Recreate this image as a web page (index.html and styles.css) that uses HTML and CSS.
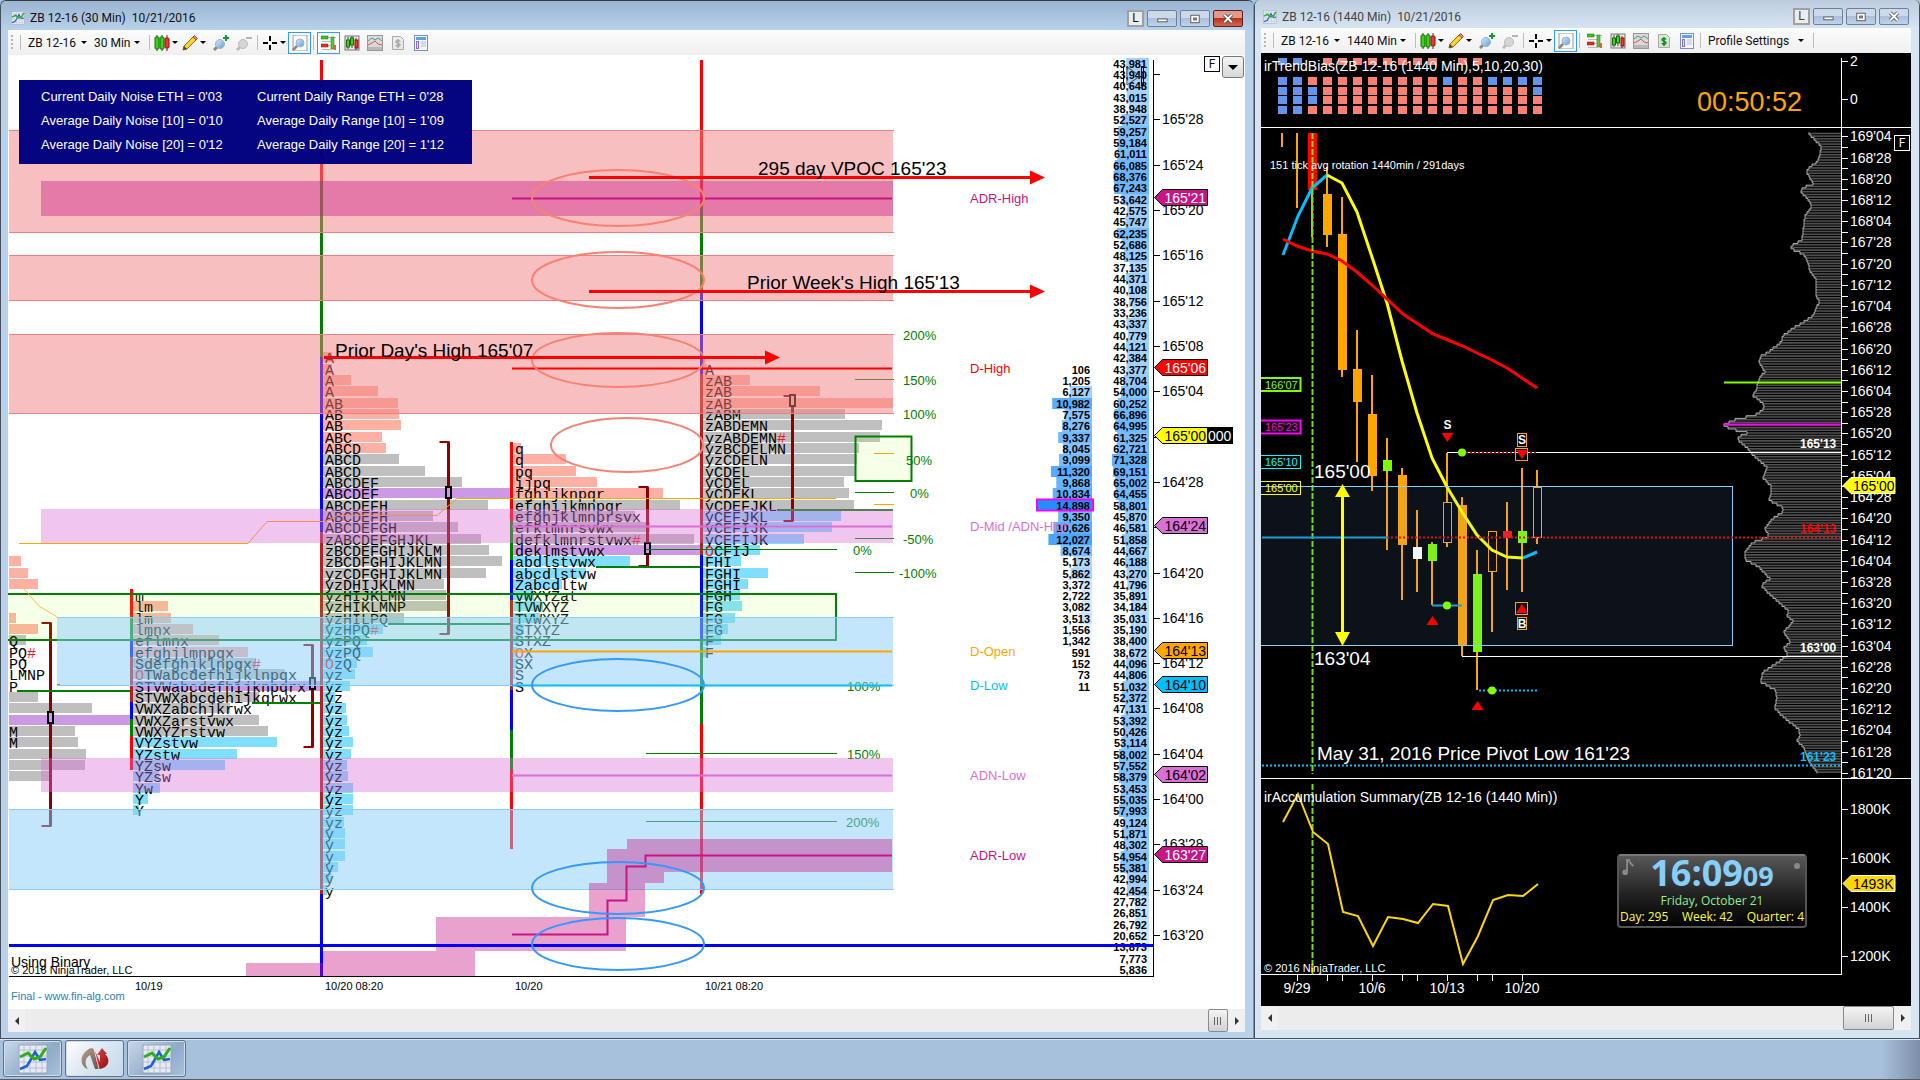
FILE: index.html
```html
<!DOCTYPE html>
<html lang="en">
<head>
    <meta charset="UTF-8">
    <meta name="viewport" content="width=device-width, initial-scale=1.0">
    <title>ZB 12-16 Charts</title>
    <link rel="stylesheet" href="styles.css">
</head>
<body>
    <svg class="sprite" aria-hidden="true">
        <defs>
            <linearGradient id="lens" x1="0" y1="0" x2="1" y2="1">
                <stop offset="0" stop-color="#d6ecfb"/><stop offset="1" stop-color="#5f9fd6"/>
            </linearGradient>
            <linearGradient id="brown" x1="0" y1="0" x2="1" y2="1">
                <stop offset="0" stop-color="#b5a393"/><stop offset="1" stop-color="#6b5646"/>
            </linearGradient>
            <linearGradient id="crimson" x1="0" y1="0" x2="1" y2="1">
                <stop offset="0" stop-color="#e04a4a"/><stop offset="1" stop-color="#8f0f18"/>
            </linearGradient>
        </defs>
        <symbol id="i-app" viewBox="0 0 30 30">
            <rect x="1" y="1" width="28" height="28" fill="#e6eaf4" stroke="#9aa3bb"/>
            <path d="M6 1v28M12 1v28M18 1v28M24 1v28M1 6h28M1 12h28M1 18h28M1 24h28" stroke="#b9c0d2" stroke-width="1"/>
            <path d="M2 25l7-3 3-5 5-9 5 8 6-1" fill="none" stroke="#1f5fd0" stroke-width="2.5"/>
            <path d="M2 13l8-4 6 6 6-2 6-9" fill="none" stroke="#2fae1c" stroke-width="3"/>
        </symbol>
        <symbol id="i-candles" viewBox="0 0 16 16">
            <path d="M3 0v16M8 0v16M13 0v16" stroke="#333" stroke-width="1"/>
            <rect x="1" y="2" width="4" height="12" rx="1" fill="#3fd01c" stroke="#1b6d0b"/>
            <rect x="6" y="2" width="4" height="12" rx="1" fill="#3fd01c" stroke="#1b6d0b"/>
            <rect x="11" y="3" width="4" height="10" rx="1" fill="#f0372b" stroke="#8a1610"/>
        </symbol>
        <symbol id="i-pencil" viewBox="0 0 16 16">
            <path d="M1 15l1-4L11 2l3 3-9 9z" fill="#ffd32a" stroke="#8b6a1a"/>
            <path d="M11 2l1.500-1.500 3 3L14 5z" fill="#f08a8a" stroke="#a34c4c"/>
            <path d="M1 15l1-4 3 3z" fill="#5a4632"/>
        </symbol>
        <symbol id="i-zoomin" viewBox="0 0 16 16">
            <path d="M1 15l4-4" stroke="#888" stroke-width="3"/>
            <circle cx="7" cy="9" r="4.500" fill="url(#lens)" stroke="#9fb2c4"/>
            <path d="M13 0v6M10 3h6" stroke="#0f9d2f" stroke-width="2"/>
        </symbol>
        <symbol id="i-zoomout" viewBox="0 0 16 16">
            <path d="M1 15l4-4" stroke="#bbb" stroke-width="3"/>
            <circle cx="7" cy="9" r="4.500" fill="#d5d5d5" stroke="#bdbdbd"/>
            <path d="M10 3h6" stroke="#b5b5b5" stroke-width="2"/>
        </symbol>
        <symbol id="i-cross" viewBox="0 0 16 16">
            <path d="M8 1v5M8 10v5M1 8h5M10 8h5" stroke="#000" stroke-width="2"/>
        </symbol>
        <symbol id="i-lens" viewBox="0 0 16 16">
            <rect x="1" y="0" width="14" height="16" fill="#fafafa" stroke="#999"/>
            <path d="M1 15l4-4" stroke="#888" stroke-width="2.500"/>
            <circle cx="8" cy="8" r="4" fill="url(#lens)" stroke="#9fb2c4"/>
        </symbol>
        <symbol id="i-orders" viewBox="0 0 16 16">
            <path d="M7 2.500h8M1 6.500h9M7 10.500h3M1 14.500h9" stroke="#bbb"/>
            <rect x="0" y="1" width="7" height="3" fill="#37c61c" stroke="#1b6d0b" stroke-width=".5"/>
            <rect x="0" y="9" width="7" height="3" fill="#ee2a1e" stroke="#8a1610" stroke-width=".5"/>
            <rect x="10" y="2" width="3" height="12" fill="#55c93a" stroke="#1b6d0b" stroke-width=".5"/>
            <rect x="13" y="10" width="2" height="5" fill="#e0603c"/>
        </symbol>
        <symbol id="i-bars" viewBox="0 0 16 16">
            <rect x="1" y="1" width="14" height="14" fill="#e8e8e8" stroke="#777"/>
            <path d="M4 2v12M8 1v12M12 3v12" stroke="#444"/>
            <rect x="2.500" y="5" width="3" height="7" fill="#3fd01c" stroke="#1b6d0b"/>
            <rect x="6.500" y="3" width="3" height="7" fill="#3fd01c" stroke="#1b6d0b"/>
            <rect x="11" y="5" width="3" height="8" fill="#f0372b" stroke="#8a1610"/>
        </symbol>
        <symbol id="i-panel" viewBox="0 0 16 16">
            <rect x=".5" y=".5" width="15" height="15" fill="#d9d9d9" stroke="#999"/>
            <path d="M1 6l4-3 3 2 3-2 4 3" fill="none" stroke="#3aa58c"/>
            <path d="M1 10l4-2 3-2 3 3 4 1" fill="none" stroke="#e0554a"/>
            <rect x="1" y="12" width="14" height="3" fill="#b8b8b8"/>
        </symbol>
        <symbol id="i-dollar" viewBox="0 0 16 16">
            <path d="M2.500 1.500h8l3 3v10h-11z" fill="currentColor" fill-opacity=".15" stroke="#aaa"/>
            <path d="M10 6.500C9.500 5 6 5 6 6.800S10 8 10 9.800 6.500 11.800 6 10M8 4v9" fill="none" stroke="currentColor" stroke-width="1.500"/>
        </symbol>
        <symbol id="i-form" viewBox="0 0 16 16">
            <rect x="1.500" y=".5" width="13" height="15" fill="#f2f6fd" stroke="#7c8fc0"/>
            <rect x="3" y="2" width="10" height="3" fill="#5aa3ec"/>
            <rect x="3.500" y="6.500" width="2" height="7" fill="#e6dcff" stroke="#8c6be0"/>
            <path d="M8 7h5M8 9h5M8 11h5" stroke="#b9c0d2"/>
        </symbol>
        <symbol id="i-ninja" viewBox="0 0 30 24">
            <path d="M8 22C-1 19-1 6 11 1l3 1 5 20h-4L10 8c-5 3-6 9-2 14z" fill="url(#brown)"/>
            <path d="M14 2l6 13V8h-3l5-7 5 6h-2c6 5 4 14-6 15l-3-5z" fill="url(#crimson)"/>
            <path d="M14 2l5 20" stroke="#fff" stroke-width=".8"/>
        </symbol>
    </svg>

    <main class="desktop">
        <section class="window active" aria-label="30 minute chart">
            <header class="titlebar">
                <svg class="app-icon"><use href="#i-app"/></svg>
                <span class="title">ZB 12-16 (30 Min)&nbsp; 10/21/2016</span>
                <button class="link-btn">L</button>
                <button class="win-btn" aria-label="Minimize"><svg viewBox="0 0 30 16"><rect x="10.500" y="8.500" width="10" height="3" fill="#fff" stroke="#556"/></svg></button>
                <button class="win-btn" aria-label="Maximize"><svg viewBox="0 0 30 16"><rect x="10.500" y="4.500" width="9" height="8" fill="#fff" stroke="#556"/><rect x="13.500" y="7.500" width="3" height="2" fill="#9ab" stroke="#556"/></svg></button>
                <button class="win-btn close" aria-label="Close"><svg viewBox="0 0 30 16"><path d="M11 4l8 8M19 4l-8 8" stroke="#544" stroke-width="4"/><path d="M11 4l8 8M19 4l-8 8" stroke="#fff" stroke-width="2"/></svg></button>
            </header>
            <nav class="toolbar" aria-label="Chart tools">
                <span class="grip"></span><span class="sep"></span>
                <select class="pick symbol" aria-label="Instrument"><option>ZB 12-16</option></select>
                <select class="pick period30" aria-label="Interval"><option>30 Min</option></select>
                <span class="sep"></span>
                <button class="tool menu" aria-label="Chart style"><svg><use href="#i-candles"/></svg></button>
                <button class="tool menu" aria-label="Drawing tools"><svg><use href="#i-pencil"/></svg></button>
                <button class="tool" aria-label="Zoom in"><svg><use href="#i-zoomin"/></svg></button>
                <button class="tool" aria-label="Zoom out"><svg><use href="#i-zoomout"/></svg></button>
                <span class="sep"></span>
                <button class="tool menu cursor" aria-label="Cursor"><svg><use href="#i-cross"/></svg></button>
                <button class="tool on" aria-label="Data box"><svg><use href="#i-lens"/></svg></button>
                <span class="sep"></span>
                <button class="tool on" aria-label="Chart trader"><svg><use href="#i-orders"/></svg></button>
                <button class="tool" aria-label="Data series"><svg><use href="#i-bars"/></svg></button>
                <button class="tool" aria-label="Indicators"><svg><use href="#i-panel"/></svg></button>
                <button class="tool off" aria-label="Strategies"><svg><use href="#i-dollar"/></svg></button>
                <button class="tool" aria-label="Properties"><svg><use href="#i-form"/></svg></button>
            </nav>
            <div class="pane light">
                <svg id="chart30" class="chart" viewBox="8 55 1237 954" preserveAspectRatio="xMinYMin meet"></svg>
                <div class="pane-tools">
                    <button class="fix-btn">F</button>
                    <button class="drop-btn" aria-label="Chart menu"></button>
                </div>
            </div>
            <div class="scrollbar">
                <button class="arrow left" aria-label="Scroll left"></button>
                <span class="track"></span>
                <button class="thumb" aria-label="Scroll position"></button>
                <button class="arrow right" aria-label="Scroll right"></button>
            </div>
        </section>

        <section class="window" aria-label="Daily chart">
            <header class="titlebar">
                <svg class="app-icon"><use href="#i-app"/></svg>
                <span class="title">ZB 12-16 (1440 Min)&nbsp; 10/21/2016</span>
                <button class="link-btn">L</button>
                <button class="win-btn" aria-label="Minimize"><svg viewBox="0 0 30 16"><rect x="10.500" y="8.500" width="10" height="3" fill="#fff" stroke="#556"/></svg></button>
                <button class="win-btn" aria-label="Maximize"><svg viewBox="0 0 30 16"><rect x="10.500" y="4.500" width="9" height="8" fill="#fff" stroke="#556"/><rect x="13.500" y="7.500" width="3" height="2" fill="#9ab" stroke="#556"/></svg></button>
                <button class="win-btn" aria-label="Close"><svg viewBox="0 0 30 16"><path d="M11 4l8 8M19 4l-8 8" stroke="#556" stroke-width="4"/><path d="M11 4l8 8M19 4l-8 8" stroke="#fff" stroke-width="2"/></svg></button>
            </header>
            <nav class="toolbar" aria-label="Chart tools">
                <span class="grip"></span><span class="sep"></span>
                <select class="pick symbol" aria-label="Instrument"><option>ZB 12-16</option></select>
                <select class="pick period1440" aria-label="Interval"><option>1440 Min</option></select>
                <span class="sep"></span>
                <button class="tool menu" aria-label="Chart style"><svg><use href="#i-candles"/></svg></button>
                <button class="tool menu" aria-label="Drawing tools"><svg><use href="#i-pencil"/></svg></button>
                <button class="tool" aria-label="Zoom in"><svg><use href="#i-zoomin"/></svg></button>
                <button class="tool" aria-label="Zoom out"><svg><use href="#i-zoomout"/></svg></button>
                <span class="sep"></span>
                <button class="tool menu cursor" aria-label="Cursor"><svg><use href="#i-cross"/></svg></button>
                <button class="tool on" aria-label="Data box"><svg><use href="#i-lens"/></svg></button>
                <span class="sep"></span>
                <button class="tool" aria-label="Chart trader"><svg><use href="#i-orders"/></svg></button>
                <button class="tool" aria-label="Data series"><svg><use href="#i-bars"/></svg></button>
                <button class="tool" aria-label="Indicators"><svg><use href="#i-panel"/></svg></button>
                <button class="tool money" aria-label="Strategies"><svg><use href="#i-dollar"/></svg></button>
                <button class="tool" aria-label="Properties"><svg><use href="#i-form"/></svg></button>
                <span class="sep"></span>
                <select class="pick profile" aria-label="Profile"><option>Profile Settings</option></select>
                <span class="sep"></span>
            </nav>
            <div class="pane dark">
                <svg id="chart1440" class="chart" viewBox="1261 53 650 953" preserveAspectRatio="xMinYMin meet"></svg>
                <button class="fix-btn">F</button>
                <div class="clock">
                    <svg class="note" viewBox="0 0 12 18"><path d="M5 14V1h2c0 3 4 4 4 7" fill="none" stroke="#888" stroke-width="2"/><ellipse cx="3" cy="14" rx="3" ry="3" fill="#888"/></svg>
                    <span class="dot"></span>
                    <div class="time">16:09<small>09</small></div>
                    <div class="date">Friday, October 21</div>
                    <div class="counts"><span>Day: 295</span><span>Week: 42</span><span>Quarter: 4</span></div>
                </div>
            </div>
            <div class="scrollbar wide">
                <button class="arrow left" aria-label="Scroll left"></button>
                <span class="track"></span>
                <button class="thumb" aria-label="Scroll position"></button>
                <button class="arrow right" aria-label="Scroll right"></button>
            </div>
        </section>
    </main>

    <footer class="taskbar">
        <button class="task" aria-label="Chart window"><svg viewBox="0 0 30 30"><use href="#i-app"/></svg></button>
        <button class="task current" aria-label="NinjaTrader"><svg viewBox="0 0 30 24"><use href="#i-ninja"/></svg></button>
        <button class="task" aria-label="Chart window"><svg viewBox="0 0 30 30"><use href="#i-app"/></svg></button>
    </footer>
    <script src="charts.js"></script>
</body>
</html>
```
FILE: styles.css
```css
* { box-sizing: border-box; }
body {
    margin: 0;
    height: 100vh;
    display: flex;
    flex-direction: column;
    overflow: hidden;
    background: #a7c0dc;
    font-family: Roboto, "Liberation Sans", sans-serif;
    font-size: 12px;
    color: #111;
}
button, select {
    font: inherit;
    color: inherit;
    margin: 0;
    padding: 0;
    border: 0;
    background: none;
}
.sprite {
    position: absolute;
    width: 0;
    height: 0;
}
.desktop {
    flex: 1;
    min-height: 0;
    display: grid;
    grid-template-columns: 1254fr 666fr;
}

/* windows */
.window {
    display: flex;
    flex-direction: column;
    min-width: 0;
    min-height: 0;
    padding: 0 8px 8px 6px;
    background: #d7e4f1;
    border: 1px solid #46505c;
    border-top: 0;
    border-radius: 6px 6px 0 0;
}
.window.active {
    padding: 0 8px 6px 7px;
    background: #b9d1ea;
    border-top: 1px solid #3a3a44;
    border-right-color: #1fb5e0;
}
.titlebar {
    height: 28px;
    flex: none;
    display: flex;
    align-items: center;
    gap: 3px;
    margin: 0 -8px 0 -6px;
    padding: 5px 10px 0 8px;
    background: linear-gradient(#bccde0, #d7e4f1);
    border-radius: 6px 6px 0 0;
    color: #444;
}
.active .titlebar {
    height: 29px;
    margin: 0 -8px 0 -7px;
    padding: 5px 10px 0;
    background: linear-gradient(#9ab4d2, #b9d1ea);
    color: #111;
}
.titlebar .app-icon {
    width: 14px;
    height: 14px;
}
.title {
    flex: 1;
    font-size: 12px;
    padding-left: 2px;
}
.link-btn {
    width: 17px;
    height: 17px;
    border: 2px solid #a0a0a0;
    background: #ececec;
    line-height: 13px;
}
.win-btn {
    width: 30px;
    height: 17px;
    border: 1px solid #6d819c;
    border-radius: 2px;
    background: linear-gradient(#cbd9ea 45%, #a9bfda 50%, #c0d3e8);
}
.win-btn svg {
    display: block;
    width: 28px;
    height: 15px;
}
.win-btn.close {
    border-color: #5b1e1a;
    background: linear-gradient(#e0998b 45%, #b8341d 50%, #d2694c);
}

/* toolbar */
.toolbar {
    height: 25px;
    flex: none;
    display: flex;
    align-items: center;
    background: linear-gradient(#fcfcfc, #efefef);
    padding-left: 3px;
}
.grip {
    width: 2px;
    height: 15px;
    background: repeating-linear-gradient(#b5b5b5 0 2px, transparent 2px 4px);
}
.sep {
    width: 1px;
    height: 15px;
    margin: 0 3px 0 2px;
    background: #bdbdbd;
}
.grip + .sep { margin: 0 7px; }
.pick {
    appearance: none;
    height: 20px;
    background: url('data:image/svg+xml,%3Csvg xmlns="http://www.w3.org/2000/svg" width="6" height="4"%3E%3Cpath d="M0 0h6L3 3z"/%3E%3C/svg%3E') no-repeat right 7px center;
}
.symbol { width: 66px; }
.period30 { width: 53px; }
.period1440 { width: 66px; }
.profile { width: 103px; margin: 0 0 0 4px; }
.tool {
    width: 23px;
    height: 22px;
    display: flex;
    align-items: center;
    justify-content: center;
    border: 1px solid transparent;
}
.tool svg {
    width: 16px;
    height: 16px;
}
.tool.menu {
    width: 28px;
    justify-content: flex-start;
}
.tool.cursor { width: 27px; }
.tool.menu::after {
    content: "";
    margin-left: 2px;
    border: 3px solid transparent;
    border-top-color: #000;
    border-bottom: 0;
}
.tool.on {
    border-color: #3399ff;
    background: #f8fbff;
}
.tool.off { color: #aaa; }
.tool.money { color: #188a1c; }

/* chart panes */
.pane {
    flex: 1;
    min-height: 0;
    position: relative;
}
.light { background: #fff; }
.dark { background: #000; color: #fff; }
.chart {
    display: block;
    width: 100%;
    height: 100%;
    font-family: "Liberation Sans", Arial, sans-serif;
}
.tpo {
    font-family: "Liberation Mono", "Courier New", monospace;
    font-size: 15px;
}
.vol {
    font-size: 11px;
    font-weight: bold;
    text-anchor: end;
}
.t11 { font-size: 11px; }
.t13 { font-size: 13px; }
.t14 { font-size: 14px; }
.t19 { font-size: 19px; }
.t27 { font-size: 27px; }
.b12 { font-size: 12px; font-weight: bold; }
.mid { text-anchor: middle; }
.pane-tools {
    position: absolute;
    top: 1px;
    right: 1px;
    display: flex;
    gap: 2px;
}
.fix-btn {
    width: 16px;
    height: 16px;
    border: 1px solid #000;
    background: #fff;
    line-height: 14px;
}
.dark > .fix-btn {
    position: absolute;
    top: 82px;
    right: 1px;
    border-color: #fff;
    background: #000;
}
.drop-btn {
    width: 22px;
    height: 22px;
    display: flex;
    align-items: center;
    justify-content: center;
    border: 1px solid #777;
    border-radius: 3px;
    background: linear-gradient(#f5f5f5, #d8d8d8);
}
.drop-btn::after {
    content: "";
    border: 5px solid transparent;
    border-top-color: #000;
    border-bottom: 0;
}

/* clock gadget floating over the daily chart */
.clock {
    position: absolute;
    top: 84%;
    right: 16%;
    width: 190px;
    height: 74px;
    border: 2px solid #555;
    border-top-color: #777;
    border-radius: 4px;
    background: linear-gradient(#585858, #222 55%, #000);
    font-family: "Open Sans", "Noto Sans", sans-serif;
    text-align: center;
}
.time {
    font-size: 36px;
    line-height: 34px;
    font-weight: bold;
    color: #87cefa;
}
.time small { font-size: 27px; }
.date {
    font-size: 12px;
    line-height: 16px;
    color: #90ee90;
}
.counts {
    display: flex;
    justify-content: space-between;
    padding: 0 1px;
    font-size: 12px;
    line-height: 15px;
    color: #ffff30;
}
.note {
    position: absolute;
    top: 3px;
    left: 3px;
    width: 12px;
    height: 17px;
}
.dot {
    position: absolute;
    top: 7px;
    right: 5px;
    width: 6px;
    height: 6px;
    border-radius: 50%;
    background: #888;
}

/* scrollbars */
.scrollbar {
    height: 23px;
    flex: none;
    display: flex;
    background: #ececec;
}
.scrollbar.wide { height: 24px; }
.track { flex: 1; }
.thumb {
    width: 20px;
    border: 1px solid #8a8a8a;
    border-radius: 2px;
    background: repeating-linear-gradient(90deg, #666 0 1px, transparent 1px 3px) center / 8px 8px no-repeat, linear-gradient(#f4f4f4, #d2d2d2);
}
.wide .thumb { width: 51px; }
.arrow {
    width: 17px;
    display: flex;
    align-items: center;
    justify-content: center;
    background: #f0f0f0;
}
.arrow::after {
    content: "";
    border: 4px solid transparent;
}
.arrow.left::after { border-right-color: #333; border-left: 0; }
.arrow.right::after { border-left-color: #333; border-right: 0; }

/* taskbar */
.taskbar {
    height: 41px;
    flex: none;
    display: flex;
    gap: 3px;
    padding: 0 3px 2px;
    background: linear-gradient(90deg, transparent 98%, #7d8ea8), #a7c0dc;
    border-top: 1px solid #dfe9f4;
    border-bottom: 1px solid #5c5a66;
}
.task {
    width: 59px;
    display: flex;
    align-items: center;
    justify-content: center;
    border: 1px solid #5d7390;
    border-radius: 3px;
    background: linear-gradient(135deg, #c9d8e8, #8fabc8 60%, #a9c2dc);
    box-shadow: inset 0 0 0 1px #cfdeee;
}
.task.current {
    background: linear-gradient(135deg, #fff, #dbe7f2 50%, #c6d8ea);
}
.task svg {
    width: 30px;
    height: 30px;
}
```
FILE: charts.js
```javascript
const NS = "http://www.w3.org/2000/svg";

function painter(id) {
    const root = document.getElementById(id);
    const add = (tag, attrs, text) => {
        const el = document.createElementNS(NS, tag);
        for (const key in attrs) el.setAttribute(key, attrs[key]);
        if (text !== undefined) el.textContent = text;
        root.appendChild(el);
        return el;
    };
    return {
        rect: (x, y, x2, y2, fill, extra) => add("rect", { x, y, width: x2 - x, height: y2 - y, fill, ...extra }),
        frame: (x, y, x2, y2, stroke, w, fill) => add("rect", { x, y, width: x2 - x, height: y2 - y, fill: fill || "none", stroke, "stroke-width": w }),
        line: (x1, y1, x2, y2, stroke, w, dash) => add("line", { x1, y1, x2, y2, stroke, "stroke-width": w || 1, "stroke-dasharray": dash || "none" }),
        poly: (points, stroke, w, fill, extra) => add(fill ? "polygon" : "polyline", { points: points.join(" "), stroke: stroke || "none", "stroke-width": w || 1, fill: fill || "none", ...extra }),
        ellipse: (cx, cy, rx, ry, stroke) => add("ellipse", { cx, cy, rx, ry, fill: "none", stroke, "stroke-width": 2 }),
        dot: (cx, cy, fill) => add("circle", { cx, cy, r: 4, fill }),
        text: (x, y, str, cls, fill) => add("text", { x, y, class: cls, fill: fill || "#000" }, str)
    };
}

const MVR = "#c71585", ORCHID = "#da70d6", SKY = "#00bfff";

/* ---------- 30 minute market profile ---------- */
const a = painter("chart30");
const rowY = k => Math.round(119.3 + k * 11.33);
const BAR = { s: "#ffb0a5", g: "#bfbfbf", c: "#80dfff", p: "#cc99e5" };

// x of the session line, first row, then [letters, bar width, colour] per tick
const profiles = [
    [9, 39, [["", 12, "s"], ["", 19, "s"], ["", 29, "s"], ["", 0, "s"], ["", 0, "s"], ["", 7, "s"], ["", 29, "s"], ["Q", 17, "g"],
        ["PQ#", 0, "g"], ["PQ", 0, "g"], ["LMNP", 0, "g"], ["P", 0, "g"], ["", 29, "g"], ["", 83, "g"], ["", 121, "p"], ["M", 66, "g"],
        ["M", 69, "g"], ["", 77, "g"], ["", 76, "g"], ["", 40, "g"]]],
    [133, 42, [["m", 1, "s"], ["lm", 35, "s"], ["lm", 38, "s"], ["lmnx", 60, "s"], ["eflmnx", 86, "s"], ["efghjlmnpqx", 115, "s"],
        ["Sdefghjklnpqx#", 123, "g"], ["OTWabcdefhijklnpqx", 152, "g"], ["STVWabcdefhijknpqrx", 187, "p"], ["STVWXabcdehijkqrwx", 126, "g"],
        ["VWXZabchjkrwx", 97, "g"], ["VWXZarstvwx", 126, "g"], ["VWXYZrstvw", 135, "g"], ["VYZstvw", 144, "c"], ["YZstw", 104, "c"],
        ["YZsw", 92, "c"], ["YZsw", 26, "c"], ["Yw", 27, "c"], ["Y", 15, "c"], ["Y", 6, "c"]]],
    [323, 21, [["A", 9, "s"], ["A", 9, "s"], ["A", 28, "s"], ["A", 55, "s"], ["AB", 75, "s"], ["AB", 76, "s"], ["AB", 78, "s"],
        ["ABC", 59, "s"], ["ABCD", 63, "s"], ["ABCD", 76, "g"], ["ABCD", 102, "g"], ["ABCDEF", 139, "g"], ["ABCDEF", 187, "p"],
        ["ABCDEFH", 165, "g"], ["ABCDEFH", 110, "g"], ["ABCDEFGH", 135, "g"], ["zABCDEFGHJKL", 158, "g"], ["zBCDEFGHIJKLM", 166, "g"],
        ["zBCDFGHIJKLMN", 179, "g"], ["yzCDFGHIJKLMN", 163, "g"], ["yzDHIJKLMN", 121, "g"], ["yzHIJKLMN", 123, "g"],
        ["yzHIKLMNP", 124, "g"], ["yzHILPQ", 81, "g"], ["yzHPQ#", 60, "c"], ["yzPQ", 44, "c"], ["yzPQ", 50, "c"], ["OzQ", 34, "c"],
        ["yz", 32, "c"], ["yz", 27, "c"], ["yz", 12, "c"], ["yz", 23, "c"], ["yz", 24, "c"], ["yz", 26, "c"], ["yz", 30, "c"],
        ["yz", 28, "c"], ["yz", 24, "c"], ["yz", 25, "c"], ["yz", 30, "c"], ["yz", 30, "c"], ["yz", 30, "c"], ["yz", 21, "c"],
        ["y", 22, "c"], ["y", 22, "c"], ["y", 22, "c"], ["y", 15, "c"], ["y", 9, "c"], ["y", 4, "c"]]],
    [513, 29, [["q", 8, "s"], ["q", 53, "s"], ["pq", 63, "s"], ["ijpq", 84, "s"], ["fghijknpqr", 150, "s"], ["efghijkmnpqr", 167, "g"],
        ["efghjklmnprsvx", 122, "g"], ["efklmnrsvwx", 137, "g"], ["defklmnrstvwx#", 181, "g"], ["deklmstvwx", 187, "p"],
        ["abdlstvwx", 117, "c"], ["abcdlstvw", 73, "c"], ["Zabcdltw", 49, "c"], ["vWXYZat", 21, "c"], ["TVWXYZ", 30, "c"],
        ["TVWXYZ", 27, "c"], ["STXYZ", 11, "c"], ["STXZ", 6, "c"], ["OX", 4, "c"], ["SX", 4, "c"], ["S", 2, "c"], ["S", 0, "c"]]],
    [703, 22, [["A", 4, "s"], ["zAB", 47, "s"], ["zAB", 117, "s"], ["zAB", 190, "s"], ["zABM", 142, "g"], ["zABDEMN", 179, "g"],
        ["yzABDEMN#", 177, "g"], ["yzBCDELMN", 156, "g"], ["yzCDELN", 154, "g"], ["yCDEL", 152, "g"], ["yCDEL", 141, "g"],
        ["yCDEKL", 146, "g"], ["yCDEFJKL", 151, "g"], ["yCEFJKL", 138, "c"], ["yCEFIJK", 129, "c"], ["yCEFIJK", 101, "c"],
        ["OCFIJ", 57, "c"], ["FHI", 38, "c"], ["FGHI", 65, "c"], ["FGHI", 45, "c"], ["FGH", 37, "c"], ["FG", 39, "c"],
        ["FG", 32, "c"], ["FG", 25, "c"], ["F", 18, "c"], ["F", 5, "c"]]]
];
profiles.forEach(([x, first, rows]) => rows.forEach(([, w, c], i) => {
    const y = rowY(first + i);
    a.rect(x, y - 5, x + w, y + 5, BAR[c]);
}));

// session separators, coloured by segment
const R = "red", G = "green", B = "blue", W = "#b22222";
[
    [321.5, 60, [[181, R], [357, G], [532, B], [894, W], [976, B]]],
    [701.5, 60, [[204, R], [290, G], [374, B], [555, W], [640, B], [724, G], [894, R]]],
    [131.5, 589, [[617, R], [640, G], [657, B], [702, W], [719, B], [736, G], [770, R]]],
    [511.5, 442, [[521, R], [560, G], [600, B], [690, W], [730, B], [770, G], [849, R]]]
].forEach(([x, top, parts]) => parts.forEach(([end, colour]) => {
    a.line(x, top, x, end, colour, 3);
    top = end;
}));

// range brackets with the mid marker
[[50.5, 623, 826, 712, BAR.p], [312.5, 645, 747, 678, BAR.p], [448.5, 442, 634, 487, BAR.p], [647.5, 487, 566, 543, BAR.p], [792.5, 396, 521, 395, BAR.s]]
    .forEach(([x, y1, y2, mark, fill]) => {
        a.poly([x - 9, y1, x, y1, x, y2, x - 9, y2], "#8b0000", 2);
        a.line(x, y1, x, y2, "#8b0000", 3);
        a.frame(x - 2.5, mark, x + 2.5, mark + 11, "#000", 2, fill);
    });

profiles.forEach(([x, first, rows]) => rows.forEach(([letters], i) => {
    if (!letters) return;
    const t = a.text(x === 9 ? 9 : x + 2, rowY(first + i) + 6, "", "tpo");
    // the open print and the close marker are red
    letters.split(/([#O])/).filter(Boolean).forEach(part => {
        const span = document.createElementNS(NS, "tspan");
        span.textContent = part;
        if (part === "#" || part === "O") span.setAttribute("fill", "#ee1c2e");
        t.appendChild(span);
    });
}));

a.frame(-4, 594, 836, 640, "green", 2, "rgba(173,255,47,.11)");
a.frame(855.5, 436.5, 911.5, 481, "green", 2, "rgba(173,255,47,.11)");
a.poly([19, 543.5, 248, 543.5, 267, 521.5, 325, 521.5, 338, 515.5, 437, 515.5, 457, 498.5, 836, 498.5], "orange", 1);
a.poly([19, 583, 39, 606, 57, 617], "#ffc040", 1);
[[388, 624, 510], [596, 567, 700], [777, 510, 893], [17, 691, 130], [252, 703, 320], [57, 685, 60]].forEach(([x, y, x2]) => a.line(x, y, x2, y, "green", 2));
[549.5, 753.5, 821.5].forEach(y => a.line(646, y, 837, y, "green"));
[379.5, 413.5, 492.5, 538.5, 572.5].forEach(y => a.line(855, y, 894, y, "green"));
[453.5, 504.5].forEach(y => a.line(874, y, 894, y, "orange"));
[["100%", 847, 686], ["150%", 847, 754], ["200%", 846, 822]].forEach(([s, x, y]) => a.text(x, y + 5, s, "t13", "green"));

// support and resistance zones
const zone = (x, y1, y2, fill, edge) => {
    a.rect(x, y1, 893, y2, fill);
    if (edge) {
        a.line(x, y1, 894, y1, edge);
        a.line(x, y2, 894, y2, edge);
    }
};
const coral = "rgba(240,128,128,.5)", ice = "rgba(135,206,250,.5)", lilac = "rgba(218,112,214,.4)", plum = "rgba(199,21,133,.4)";
zone(9, 130.5, 232.5, coral, "#f08080");
zone(9, 255.5, 300.5, coral, "#f08080");
zone(9, 334.5, 413.5, coral, "#f08080");
zone(57, 617.5, 685.5, ice, "#87cefa");
zone(9, 809.5, 889.5, ice, "#87cefa");
zone(41, 509, 543, lilac);
zone(41, 758, 792, lilac);
zone(41, 181, 216, plum);
a.poly([246, 963, 323, 963, 323, 951, 436, 951, 436, 917, 589, 917, 589, 883, 607, 883, 607, 849, 627, 849, 627, 839, 892, 839,
    892, 872, 664, 872, 664, 883, 645, 883, 645, 917, 626, 917, 626, 951, 475, 951, 475, 976, 246, 976], "", 0, plum);

const level = (y, colour) => {
    a.line(512, y, 892, y, colour, 3).setAttribute("opacity", ".5");
    a.line(512, y, 892, y, colour, 1);
};
level(198.5, MVR);
level(368.5, "red");
level(526.5, ORCHID);
level(651.5, "orange");
level(685.5, SKY);
level(775.5, ORCHID);
a.poly([512, 934.5, 607.5, 934.5, 607.5, 900.5, 626.5, 900.5, 626.5, 866.5, 645.5, 866.5, 645.5, 855.5, 892, 855.5], MVR, 2);

a.line(9, 945.5, 1153, 945.5, "blue", 3);
a.line(9, 976.5, 1154, 976.5, "#000");

[[618, 198, 86, 28], [618, 280, 86, 28], [618, 360, 86, 27], [627, 445, 76, 27]].forEach(e => a.ellipse(...e, "#fa8072"));
[685, 888, 944].forEach(y => a.ellipse(618, y, 86, 26, "#3399ff"));

[[589, 177.5, 1045], [589, 291.5, 1045], [324, 357.5, 780]].forEach(([x, y, tip]) => {
    a.line(x, y, tip - 10, y, "red", 3);
    a.poly([tip - 15, y - 7, tip, y, tip - 15, y + 7], "", 0, "red");
});
a.text(758, 175, "295 day VPOC 165'23", "t19");
a.text(747, 289, "Prior Week's High 165'13", "t19");
a.text(335, 357, "Prior Day's High 165'07", "t19");

[["200%", 903, 335], ["150%", 903, 380], ["100%", 903, 414], ["50%", 906, 460], ["0%", 910, 493], ["-50%", 903, 539], ["-100%", 899, 573], ["0%", 853, 550]]
    .forEach(([s, x, y]) => a.text(x, y + 5, s, "t13", "green"));

// volume columns
const session = [106, 1205, 6127, 10982, 7575, 8276, 9337, 8045, 9099, 11320, 9868, 10834, 14898, 9350, 10626, 12027, 8674, 5173, 5862,
    3372, 2722, 3082, 3513, 1556, 1342, 591, 152, 73, 11];
const composite = [43981, 43940, 40648, 43015, 38948, 52527, 59257, 59184, 61011, 66085, 68376, 67243, 53642, 42575, 45747, 62235, 52686,
    48125, 37135, 44371, 40108, 38756, 33236, 43337, 40779, 44121, 42384, 43377, 48704, 54000, 60252, 66896, 64995, 61325, 62721, 71328,
    69151, 65002, 64455, 58801, 45870, 46581, 51858, 44667, 46188, 43270, 41796, 35891, 34184, 35031, 35190, 38400, 38672, 44096, 44806,
    51032, 52372, 47131, 53392, 50426, 53114, 58002, 57552, 58379, 53453, 55035, 57993, 49124, 51871, 48302, 54954, 55381, 42994, 42454,
    27782, 26851, 26792, 20652, 13873, 7773, 5836];
const volumes = (data, first, right, width, strength) => {
    const max = Math.max(...data);
    data.forEach((v, i) => {
        const y = rowY(first + i);
        a.rect(right - width * v / max, y - 5, right, rowY(first + i + 1) - 5, "#1e90ff", { opacity: strength * v / max });
    });
    data.forEach((v, i) => a.text(right - 2, rowY(first + i) + 5, v.toLocaleString("en-US"), "vol"));
};
volumes(session, 22, 1092, 54, 1);
volumes(composite, -5, 1149, 37, 0.7);
a.frame(1037, 499.5, 1093, 510.5, "magenta", 2);
a.line(1110, 945.5, 1153, 945.5, "blue", 3);
a.line(1123.5, 66, 1123.5, 86, "#000");
a.poly([1127, 67, 1140, 76, 1127, 85, 1127, 67], "#444", 1);
a.frame(1141.5, 66.5, 1143.5, 85.5, "#000", 1);

[["ADR-High", 198, MVR], ["D-High", 368, "red"], ["D-Mid /ADN-High", 526, ORCHID], ["D-Open", 651, "orange"], ["D-Low", 685, SKY],
    ["ADN-Low", 775, ORCHID], ["ADR-Low", 855, MVR]].forEach(([s, y, c]) => a.text(970, y + 5, s, "t13", c));

// price axis
a.line(1153.5, 60, 1153.5, 977, "#000");
const price = t => Math.floor(t / 32) + "'" + String(t % 32).padStart(2, "0");
for (let k = -4; k <= 72; k += 4) {
    const y = rowY(k) + 0.5;
    a.line(1154, y, 1160, y, "#000");
    if (k !== -4 && k !== 28 && k !== 36) a.text(1162, y + 4.5, price(165 * 32 + 28 - k), "t14");
}
const tag = (p, x, y, w, label, fill, stroke, ink) => {
    p.poly([x, y, x + 8, y - 8, x + w, y - 8, x + w, y + 8, x + 8, y + 8], stroke, 1, fill);
    p.text(x + 10, y + 5, label, "t14", ink);
};
a.rect(1207, 427, 1233, 444, "#000");
a.text(1208, 440.5, "000", "t14", "#fff");
[[7, MVR, "#fff"], [22, "red", "#fff"], [28, "yellow", "#000"], [36, ORCHID, "#000"], [47, "orange", "#000"], [50, SKY, "#000"],
    [58, ORCHID, "#000"], [65, MVR, "#fff"]].forEach(([k, fill, ink]) => tag(a, 1154.5, rowY(k) - 1.5, 53, price(165 * 32 + 28 - k), fill, "#000", ink));

// statistics box
a.rect(19, 80, 472, 164, "#000080", { opacity: 0.98 });
["Current Daily Noise ETH = 0'03", "Average Daily Noise [10] = 0'10", "Average Daily Noise [20] = 0'12"].forEach((s, i) => a.text(41, 101 + 24 * i, s, "t13", "#fff"));
["Current Daily Range ETH = 0'28", "Average Daily Range [10] = 1'09", "Average Daily Range [20] = 1'12"].forEach((s, i) => a.text(257, 101 + 24 * i, s, "t13", "#fff"));

a.text(11, 967, "Using Binary", "t14");
a.text(11, 974, "© 2016 NinjaTrader, LLC", "t11");
[["10/19", 135], ["10/20 08:20", 325], ["10/20", 515], ["10/21 08:20", 705]].forEach(([s, x]) => a.text(x, 990, s, "t11"));
a.text(11, 1000, "Final - www.fin-alg.com", "t11", "#2384bd");

/* ---------- daily chart ---------- */
const b = painter("chart1440");
const colX = n => 1282 + 15 * n;
const BLUE = "#6495ed", SALMON = "#fa8072", LIME = "#7fff00";

// trend bias squares: b = blue, r = salmon, . = empty
[[58, 7, "bb.rrrrrrrr.rr...."], [77, 8, "bbrrrrrrrrrbrrbbbb"], [87, 8, "bbbrrrrrrrrrrrrrrb"], [96, 8, "bbbrrrrrrrrrrrrrrr"], [106, 8, "bbrrrrrrrrrrrrrrrr"]]
    .forEach(([y, h, row]) => [...row].forEach((c, n) => {
        if (c !== ".") b.rect(colX(n) - 4, y, colX(n) + 5, y + h, c === "b" ? BLUE : SALMON);
    }));
b.text(1264, 71, "irTrendBias(ZB 12-16 (1440 Min),5,10,20,30)", "t14", "#fff");
b.text(1697, 111, "00:50:52", "t27", "orange");

// volume profile on the right edge: [left edge, y]
const shape = [[1808, 133], [1815, 140], [1821, 146], [1820, 155], [1818, 161], [1810, 167], [1806, 172], [1812, 181], [1813, 184], [1805, 187],
    [1800, 191], [1807, 198], [1812, 206], [1805, 215], [1803, 230], [1802, 240], [1791, 246], [1791, 249], [1803, 254], [1808, 262],
    [1810, 271], [1816, 279], [1816, 297], [1820, 302], [1816, 307], [1813, 316], [1800, 324], [1789, 331], [1783, 336], [1781, 342],
    [1771, 350], [1760, 357], [1759, 362], [1765, 372], [1759, 378], [1756, 390], [1753, 396], [1763, 403], [1765, 408], [1755, 415],
    [1734, 420], [1724, 425], [1730, 429], [1747, 433], [1738, 437], [1739, 441], [1747, 448], [1755, 457], [1767, 467], [1763, 478],
    [1771, 486], [1771, 494], [1769, 500], [1782, 507], [1783, 512], [1771, 520], [1765, 529], [1769, 536], [1752, 543], [1744, 553],
    [1746, 560], [1760, 568], [1770, 579], [1761, 585], [1766, 591], [1778, 602], [1789, 611], [1787, 616], [1793, 621], [1784, 632],
    [1790, 642], [1784, 648], [1788, 655], [1778, 662], [1762, 673], [1761, 682], [1775, 690], [1777, 699], [1774, 708], [1785, 718],
    [1799, 730], [1800, 736], [1797, 741], [1805, 749], [1807, 758], [1815, 770], [1819, 774]];
const outline = [];
for (let y = 133.5; y < 773; y += 2.65) {
    const j = Math.max(1, shape.findIndex(p => p[1] > y));
    const [x0, y0] = shape[j - 1], [x1, y1] = shape[j];
    const x = Math.round(x0 + (x1 - x0) * (y - y0) / (y1 - y0));
    b.line(x, y, 1841, y, "#505050", 1.6);
    outline.push(x, y - 1.3, x, y + 1.3);
}
b.poly(outline, "#b0b0b0", 1);
b.line(1724, 382.5, 1841, 382.5, LIME, 2);
b.line(1724, 424.5, 1841, 424.5, "magenta", 2);

// candles: [wick top, body top, body bottom, wick bottom, fill]
const O = "orange";
[[133, 0, 0, 147, O], [133, 0, 0, 208, O], [133, 133, 190, 237, "red"], [167, 194, 235, 247, O], [197, 234, 370, 377, O], [330, 369, 402, 462, O],
    [375, 414, 476, 491, O], [438, 460, 471, 550, "#7cfc00"], [468, 475, 545, 600, O], [510, 547, 559, 592, "#fff"], [542, 544, 561, 605, "#7cfc00"],
    [453, 502, 542, 547, ""], [497, 505, 645, 656, O], [550, 574, 652, 690, "#7cfc00"], [531, 531, 571, 632, ""], [502, 531, 538, 590, "#ff1010"],
    [468, 531, 543, 592, "#7cfc00"], [470, 487, 537, 544, ""]]
    .forEach(([top, open, close, low, fill], n) => {
        const x = colX(n);
        b.line(x, top, x, low, O, 2);
        if (fill && open) b.rect(x - 4, open, x + 5, close, fill);
        if (!fill) b.frame(x - 3.5, open + 0.5, x + 4.5, close + 0.5, O, 1, "#000");
    });

b.poly([1283, 255, 1298, 216, 1312, 188, 1327, 175], SKY, 3);
b.poly([1327, 175, 1342, 183, 1357, 212, 1372, 257, 1387, 303, 1402, 361, 1417, 413, 1432, 458, 1447, 487, 1462, 512, 1477, 535, 1492, 550, 1507, 557, 1523, 558], "#ffff00", 3);
b.poly([1523, 558, 1537, 552], SKY, 3);
b.poly([1283, 239, 1297, 246, 1312, 251, 1327, 254, 1342, 261, 1357, 272, 1373, 286, 1388, 300, 1403, 314, 1418, 324, 1433, 334, 1448, 340,
    1463, 346, 1477, 353, 1492, 360, 1507, 368, 1522, 378, 1537, 388], "red", 3);
[[133, 774], [784, 974]].forEach(([y1, y2]) => b.line(1312.5, y1, 1312.5, y2, "#6fe010", 2, "6 2"));

b.frame(1250, 486.5, 1732.5, 645.5, "#87cefa", 1, "rgba(120,160,220,.11)");
b.line(1262, 537.5, 1387, 537.5, "#1e9fdc", 2);
b.line(1387, 537.5, 1841, 537.5, "#e01010", 2, "2 2");
b.line(1447, 452.5, 1841, 452.5, "#fff");
b.line(1462, 452.5, 1537, 452.5, "#c01010", 2, "2 2");
b.line(1462, 656.5, 1841, 656.5, "#fff");
b.line(1479, 690.5, 1537, 690.5, SKY, 2, "2 2");
b.line(1262, 765.5, 1841, 765.5, SKY, 2, "2 2");
b.line(1432, 605.5, 1462, 605.5, "#1e9fdc", 2);
[[1462, 452.5], [1447, 605.5], [1492, 690.5]].forEach(([x, y]) => b.dot(x, y, LIME));

// rotation arrow
b.line(1342.5, 490, 1342.5, 640, "yellow", 3);
b.poly([1335, 497, 1342.5, 484, 1350, 497], "", 0, "yellow");
b.poly([1335, 632, 1342.5, 646, 1350, 632], "", 0, "yellow");
b.text(1314, 478, "165'00", "t19", "#fff");
b.text(1314, 665, "163'04", "t19", "#fff");

// signal markers
const down = (x, y) => b.poly([x - 6, y, x + 6, y, x, y + 9], "", 0, "red");
const up = (x, y) => b.poly([x - 6, y + 9, x + 6, y + 9, x, y], "", 0, "red");
down(1447.5, 433);
up(1432.5, 616);
up(1477.5, 701);
b.frame(1515.5, 448.5, 1527.5, 460.5, O, 1);
down(1522, 450);
b.frame(1515.5, 602.5, 1527.5, 614.5, O, 1);
up(1522, 604);
b.frame(1517.5, 433.5, 1526.5, 446.5, O, 1);
b.frame(1517.5, 617.5, 1526.5, 629.5, O, 1);
b.text(1447.5, 429, "S", "b12 mid", "#fff");
b.text(1522, 444, "S", "b12 mid", "#fff");
b.text(1522, 628, "B", "b12 mid", "#fff");

[["166'07", 384.5, LIME, 2], ["165'23", 427, "magenta", 2], ["165'10", 462, "cyan", 1], ["165'00", 488, "yellow", 1]].forEach(([s, y, c, w]) => {
    b.frame(1260, y - 6.5, 1300.5, y + 6.5, c, w);
    b.text(1265, y + 4, s, "t11", c);
});
[["165'13", 444, "#fff"], ["164'13", 529, "red"], ["163'00", 648, "#fff"], ["161'23", 757, SKY]].forEach(([s, y, c]) => b.text(1800, y + 4, s, "b12", c));

b.text(1270, 169, "151 tick avg rotation 1440min / 291days", "t11", "#fff");
b.text(1317, 760, "May 31, 2016 Price Pivot Low 161'23", "t19", "#fff");

// accumulation
const acc = [822, 794, 832, 844, 912, 916, 946, 917, 919, 923, 904, 906, 964, 936, 900, 895, 896, 884];
b.poly(acc.map((y, n) => (colX(n) + 1) + "," + y), "#ffd700", 2);
b.text(1264, 802, "irAccumulation Summary(ZB 12-16 (1440 Min))", "t14", "#fff");
b.text(1264, 972, "© 2016 NinjaTrader, LLC", "t11", "#fff");

// axes
b.line(1261, 127.5, 1911, 127.5, "#fff");
b.line(1261, 778.5, 1911, 778.5, "#fff");
b.line(1261, 974.5, 1842, 974.5, "#fff");
b.line(1841.5, 58, 1841.5, 975, "#fff");
const tick = (y, label) => {
    b.line(1842, y, 1848, y, "#fff");
    if (label) b.text(1850, y + 4.5, label, "t14", "#fff");
};
tick(61.5, "2");
tick(99.5, "0");
for (let t = 0; t <= 240; t += 4) {
    const y = Math.round(136.4 + t * 2.652);
    tick(y + 0.5, t % 8 ? "" : price(169 * 32 + 4 - t));
}
[["1800K", 809.5], ["1600K", 858.5], ["1400K", 907.5], ["1200K", 956.5]].forEach(([s, y]) => tick(y, s));
tag(b, 1843, 485.5, 52, "165'00", "yellow", "#fff", "#000");
tag(b, 1843, 883.5, 52, "1493K", "#ffd700", "#fff", "#000");
[1, 3, 4, 6, 8, 9, 11, 13, 14, 16].forEach(n => b.line(colX(n) + 0.5, 975, colX(n) + 0.5, 981, "#fff"));
[["9/29", 1], ["10/6", 6], ["10/13", 11], ["10/20", 16]].forEach(([s, n]) => b.text(colX(n), 993, s, "t14 mid", "#fff"));
```
